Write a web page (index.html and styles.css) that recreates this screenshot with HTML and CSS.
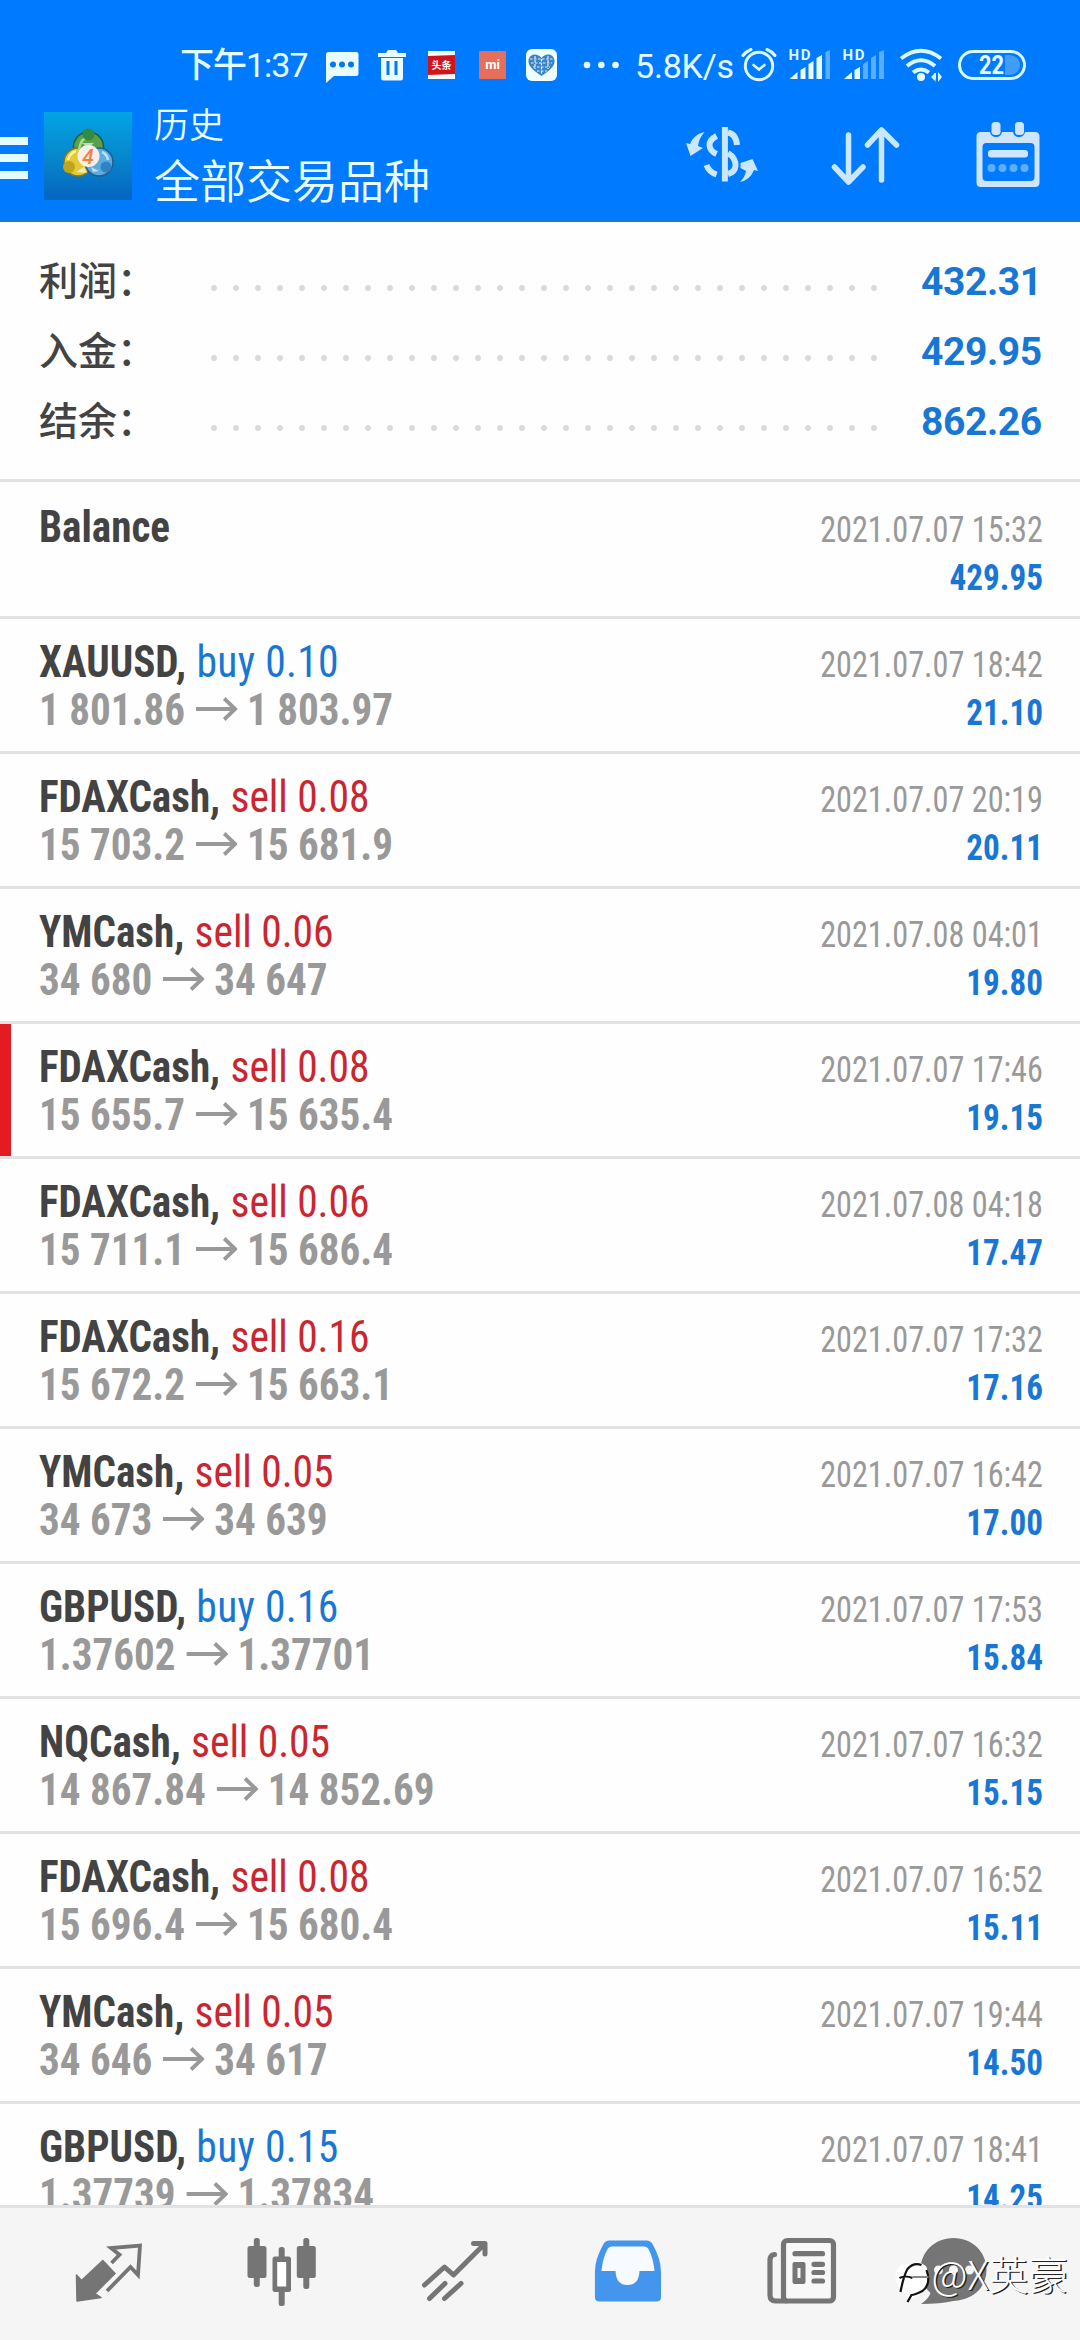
FILE: index.html
```html
<!DOCTYPE html>
<html lang="zh-CN">
<head>
<meta charset="utf-8">
<title>历史</title>
<link rel="stylesheet" href="styles.css">
</head>
<body>
<svg width="0" height="0" class="defs">
  <symbol id="arrow" viewBox="0 0 44 26"><path d="M0 13H41M30 2.500L41.500 13L30 23.500" fill="none" stroke="currentColor" stroke-width="4"/></symbol>
</svg>
<div class="screen">
  <header class="header">
    <div class="status">
      <span class="clock">下午1:37</span>
      <svg class="notices" viewBox="316 42 310 46" width="310" height="46">
        <path fill="#e8fcff" d="M328 52h28q2.500 0 2.500 2.500v19q0 2.500-2.500 2.500h-22l-8 7V54.500q0-2.500 2-2.500z"/>
        <g fill="#0878e8"><circle cx="333" cy="64.500" r="3"/><circle cx="342" cy="64.500" r="3"/><circle cx="351" cy="64.500" r="3"/></g>
        <path fill="#e8fcff" d="M378 53h8l2-3h8l2 3h8v4h-28zM381 58h22v20q0 2.500-2.500 2.500h-17q-2.500 0-2.500-2.500z"/>
        <path stroke="#0878e8" stroke-width="3" d="M388 61v14M396 61v14"/>
        <rect x="428" y="51" width="27" height="28" fill="#f4fbff"/>
        <path fill="#d0141c" d="M428 56l27-1v19l-27 1z"/>
        <text x="441.500" y="69" text-anchor="middle" font-size="10" font-weight="700" fill="#fff">头条</text>
        <rect x="479" y="51" width="27" height="28" fill="#e66f5c"/>
        <text x="492.500" y="69" text-anchor="middle" font-size="13" font-weight="700" fill="#fff" class="lat">mi</text>
        <rect x="526" y="49" width="31" height="32" rx="6" fill="#f0fdff"/>
        <path fill="#3c83c4" d="M541.500 76C531 69 528 65 528.500 60C530 53 538 53 541.500 58C545 53 553 53 554.500 60C555 65 552 69 541.500 76z"/>
        <path fill="none" stroke="#d8f2ff" stroke-width="1.200" stroke-dasharray="2.500 1.500" d="M530 59h23M531 63h21M533 67h17M537 71h10M535 56v13M541.500 59v15M548 56v13"/>
        <g fill="#e8fcff"><circle cx="587" cy="65" r="3.300"/><circle cx="601.300" cy="65" r="3.300"/><circle cx="615.500" cy="65" r="3.300"/></g>
      </svg>
      <span class="speed">5.8K/s</span>
      <svg class="signals" viewBox="738 42 300 46" width="300" height="46">
        <g fill="none" stroke="#d9f8ff" stroke-linecap="round">
          <circle cx="759" cy="66" r="13.700" stroke-width="3"/><path d="M753.500 65l5.500 4.500l5.500-4.500" stroke-width="2.600"/>
          <path d="M743 55.500q3-4 8-6M775 55.500q-3-4-8-6" stroke-width="3"/>
        </g>
        <g class="lat" font-size="15" font-weight="700" fill="#d9f8ff"><text x="788.500" y="60" textLength="22">HD</text><text x="842.500" y="60" textLength="22">HD</text></g>
        <g fill="#e8fcff"><path d="M789.500 79l8-7v7z"/><path d="M800.500 70l5-3v12h-5zM808.500 64l5-3v18h-5zM816.500 58l5.500-3v24h-5.500zM844 79l8-7v7zM854.500 70l5.500-3v12h-5.500z"/></g>
        <path fill="#5aadff" d="M825.500 52l4.500-2v29h-4.500zM863 64l5-3v18h-5zM871 58l5-3v24h-5zM879 52l5-2v29h-5z"/>
        <g fill="none" stroke="#d9f8ff" stroke-width="4"><path d="M901 58.500Q921 43 941 58.500M907 66Q921 54.500 935 66M913 72.500Q921 66.500 929 72.500"/></g>
        <circle cx="921" cy="77" r="4" fill="#e8fcff"/>
        <path fill="#d9f8ff" d="M931 77l4-4v8zM934 73h2v10zM938 72v10l4-5z"/>
        <rect x="959.500" y="51.500" width="65" height="27" rx="13.500" fill="none" stroke="#d9f8ff" stroke-width="3"/>
        <path fill="#409dfa" d="M1005 55h5q10 2 10 10t-10 10h-5z"/>
        <text x="991.500" y="74" text-anchor="middle" font-size="25" font-weight="700" fill="#e8fcff" class="lat" textLength="25" lengthAdjust="spacingAndGlyphs">22</text>
      </svg>
    </div>
    <div class="bar">
      <div class="burger"><i></i><i></i><i></i></div>
      <svg class="logo" viewBox="42 110 92 92" width="92" height="92">
        <defs><linearGradient id="sky" x1="0" y1="0" x2="0" y2="1"><stop offset="0" stop-color="#02a4e4"/><stop offset=".5" stop-color="#0788cc"/><stop offset="1" stop-color="#0565c0"/></linearGradient></defs>
        <rect x="44" y="112" width="88" height="88" fill="url(#sky)"/>
        <g stroke-width="1.500">
          <circle cx="88.500" cy="147" r="15" fill="#5aa04c" stroke="#23602c"/>
          <circle cx="78" cy="162" r="14" fill="#e3c83a" stroke="#82761c"/>
          <circle cx="99" cy="162" r="14" fill="#5cace0" stroke="#225c8c"/>
        </g>
        <path fill="none" stroke="#a9dc8a" stroke-width="2.500" d="M79 149Q81 138 88.500 137"/>
        <path fill="none" stroke="#fff09a" stroke-width="2.500" d="M68 160Q70 153 76 151"/>
        <path fill="none" stroke="#b8e2ff" stroke-width="2.500" d="M108 160Q107 154 102 152"/>
        <circle cx="88.500" cy="134.500" r="6" fill="#338a42"/><circle cx="69" cy="167" r="6" fill="#bfa51c"/><circle cx="106" cy="167" r="5.500" fill="#2f82c4"/>
        <path fill="#fff" opacity=".6" d="M82 143h12l-6 5zM76 172l8-5l3 6zM93 172l-2-5l8 4z"/>
        <circle cx="88.500" cy="156" r="11" fill="#f7efe8"/>
        <text x="88" y="163.500" text-anchor="middle" font-size="21" font-style="italic" font-weight="500" fill="#ee8242" class="lat">4</text>
      </svg>
      <div class="titles"><div class="small">历史</div><div class="large">全部交易品种</div></div>
      <svg class="actions" viewBox="680 115 370 80" width="370" height="80">
        <g fill="none" stroke="#c9e8ff" stroke-linecap="round" stroke-linejoin="round">
          <path stroke-width="6" stroke-linecap="butt" d="M724.900 127v54.500M728 132.500Q736 134 737 145M716.600 136Q709 140 709.500 145.500Q710 151 716.600 154M706.500 165Q709 172 716.600 174.500M728 153Q736 158 735.500 166Q735 172 728 174"/>
          <path stroke-width="5.500" d="M848.500 135v44M834.500 167l14 15l14.500-15M881.500 180v-49M867.500 145l14-15l15 15"/>
        </g>
        <path fill="#c9e8ff" d="M704.600 132Q699 138 698 146l5 2L690.500 156L686 143l4 1Q694 134 704.600 132zM740 182Q745 177 746 171l-5.500-3V163L752.500 159L758 171l-4-1Q750 180 740 182z"/>
        <path fill="#cfe5fb" fill-rule="evenodd" d="M981 132h9q1 5 6 5t6-5h11q1 5 6 5t6-5h10q4.500 0 4.500 4.500v46q0 4.500-4.500 4.500h-54q-4.500 0-4.500-4.500v-46q0-4.500 4.500-4.500zM982.500 147v30q0 4 4 4h44q4 0 4-4v-30q0-4-4-4h-44q-4 0-4 4z"/>
        <g fill="#cfe5fb"><rect x="991.500" y="122" width="9" height="13" rx="3.500"/><rect x="1015" y="122" width="9" height="13" rx="3.500"/><rect x="988" y="150" width="40" height="7.500" rx="3"/></g>
        <g fill="#5eafff"><circle cx="991.500" cy="168" r="4"/><circle cx="1002.500" cy="168" r="4"/><circle cx="1013.500" cy="168" r="4"/><circle cx="1024.500" cy="168" r="4"/></g>
      </svg>
    </div>
  </header>

  <section class="summary">
    <div class="sum"><span>利润：</span><i class="dots"></i><b>432.31</b></div>
    <div class="sum"><span>入金：</span><i class="dots"></i><b>429.95</b></div>
    <div class="sum"><span>结余：</span><i class="dots"></i><b>862.26</b></div>
  </section>

  <main class="list">
    <div class="row first"><div class="left"><div><b>Balance</b></div></div><div class="right"><div class="date">2021.07.07 15:32</div><b>429.95</b></div></div>
    <div class="row"><div class="left"><div><b>XAUUSD,</b> <span class="buy">buy 0.10</span></div><div class="price">1 801.86<svg><use href="#arrow"/></svg>1 803.97</div></div><div class="right"><div class="date">2021.07.07 18:42</div><b>21.10</b></div></div>
    <div class="row"><div class="left"><div><b>FDAXCash,</b> <span class="sell">sell 0.08</span></div><div class="price">15 703.2<svg><use href="#arrow"/></svg>15 681.9</div></div><div class="right"><div class="date">2021.07.07 20:19</div><b>20.11</b></div></div>
    <div class="row"><div class="left"><div><b>YMCash,</b> <span class="sell">sell 0.06</span></div><div class="price">34 680<svg><use href="#arrow"/></svg>34 647</div></div><div class="right"><div class="date">2021.07.08 04:01</div><b>19.80</b></div></div>
    <div class="row marked"><div class="left"><div><b>FDAXCash,</b> <span class="sell">sell 0.08</span></div><div class="price">15 655.7<svg><use href="#arrow"/></svg>15 635.4</div></div><div class="right"><div class="date">2021.07.07 17:46</div><b>19.15</b></div></div>
    <div class="row"><div class="left"><div><b>FDAXCash,</b> <span class="sell">sell 0.06</span></div><div class="price">15 711.1<svg><use href="#arrow"/></svg>15 686.4</div></div><div class="right"><div class="date">2021.07.08 04:18</div><b>17.47</b></div></div>
    <div class="row"><div class="left"><div><b>FDAXCash,</b> <span class="sell">sell 0.16</span></div><div class="price">15 672.2<svg><use href="#arrow"/></svg>15 663.1</div></div><div class="right"><div class="date">2021.07.07 17:32</div><b>17.16</b></div></div>
    <div class="row"><div class="left"><div><b>YMCash,</b> <span class="sell">sell 0.05</span></div><div class="price">34 673<svg><use href="#arrow"/></svg>34 639</div></div><div class="right"><div class="date">2021.07.07 16:42</div><b>17.00</b></div></div>
    <div class="row"><div class="left"><div><b>GBPUSD,</b> <span class="buy">buy 0.16</span></div><div class="price">1.37602<svg><use href="#arrow"/></svg>1.37701</div></div><div class="right"><div class="date">2021.07.07 17:53</div><b>15.84</b></div></div>
    <div class="row"><div class="left"><div><b>NQCash,</b> <span class="sell">sell 0.05</span></div><div class="price">14 867.84<svg><use href="#arrow"/></svg>14 852.69</div></div><div class="right"><div class="date">2021.07.07 16:32</div><b>15.15</b></div></div>
    <div class="row"><div class="left"><div><b>FDAXCash,</b> <span class="sell">sell 0.08</span></div><div class="price">15 696.4<svg><use href="#arrow"/></svg>15 680.4</div></div><div class="right"><div class="date">2021.07.07 16:52</div><b>15.11</b></div></div>
    <div class="row"><div class="left"><div><b>YMCash,</b> <span class="sell">sell 0.05</span></div><div class="price">34 646<svg><use href="#arrow"/></svg>34 617</div></div><div class="right"><div class="date">2021.07.07 19:44</div><b>14.50</b></div></div>
    <div class="row"><div class="left"><div><b>GBPUSD,</b> <span class="buy">buy 0.15</span></div><div class="price">1.37739<svg><use href="#arrow"/></svg>1.37834</div></div><div class="right"><div class="date">2021.07.07 18:41</div><b>14.25</b></div></div>
  </main>

  <nav class="tabs">
    <svg viewBox="21.500 2208 173 132" width="173" height="132"><path fill="#757575" stroke="#757575" stroke-width="1.500" stroke-linejoin="round" d="M76 2275l5 5.500L102.300 2260.500L114.500 2273.500L94.500 2293.500L100.500 2297.500L76.500 2301z"/><path fill="none" stroke="#757575" stroke-width="3.800" d="M111 2263l8-8.300L110.500 2248L139.500 2245.500L137.500 2275L130 2267L106.500 2291"/></svg>
    <svg viewBox="194.500 2208 173 132" width="173" height="132"><g fill="#757575"><rect x="247" y="2246" width="19" height="32" rx="2.500"/><rect x="253.300" y="2238" width="6" height="49" rx="2.500"/><rect x="296.300" y="2246" width="19" height="32" rx="2.500"/><rect x="302.800" y="2238" width="6" height="51" rx="2.500"/><rect x="278.200" y="2247" width="6" height="59" rx="2.500"/><rect x="272" y="2256.500" width="18.500" height="35.500" rx="2.500"/></g><rect x="276.700" y="2262" width="9" height="24.500" fill="#fff"/></svg>
    <svg viewBox="367.500 2208 173 132" width="173" height="132"><path fill="none" stroke="#757575" stroke-width="5" stroke-linecap="round" stroke-linejoin="round" d="M424 2285L444 2267L453 2275L484 2244M473 2243.500H484.500V2254M429 2298.500L444.500 2283.500M444 2298.500L460.500 2283.500"/></svg>
    <svg viewBox="540.500 2208 173 132" width="173" height="132"><path fill="#4395ee" d="M609 2240.500H646Q650 2240.500 652 2244Q660.500 2259 660.500 2272V2297Q660.500 2301.500 656 2301.500H599Q594.400 2301.500 594.400 2297V2272Q594.400 2259 603 2244Q605 2240.500 609 2240.500z"/><path fill="#f7fbff" d="M611 2246.500H644Q646.500 2246.500 648 2249Q653 2259 654 2271H639Q638.500 2285 627 2285Q615.500 2285 615 2271H601Q602 2259 607 2249Q608.500 2246.500 611 2246.500z"/></svg>
    <svg viewBox="713.500 2208 173 132" width="173" height="132"><path fill="none" stroke="#757575" stroke-width="5.200" stroke-linecap="round" d="M774 2254.500Q769.500 2255 769.500 2260V2295Q769.500 2301 775 2301H785"/><rect x="783" y="2240.500" width="50" height="60.500" rx="4" fill="#f8f8f8" stroke="#757575" stroke-width="5.200"/><path stroke="#757575" stroke-width="5.200" stroke-linecap="round" d="M794.500 2253.700h27.500M813.500 2264.300h8.500M813.500 2272.500h8.500M813.500 2281h8.500"/><rect x="792" y="2262" width="13" height="22" rx="2" fill="#757575"/><rect x="797" y="2268" width="3" height="10" fill="#f5f5f5"/></svg>
    <div class="chat">
      <svg viewBox="886.500 2208 193.500 132" width="193.500" height="132"><path fill="#757575" d="M953 2238C972 2238 986 2252 986 2270C986 2288 972 2300 953 2301Q940 2304 920.500 2304Q928 2299 930 2293Q920 2284 920 2270C920 2252 934 2238 953 2238z"/><g fill="#f5f5f5"><circle cx="938" cy="2270" r="4.500"/><circle cx="953" cy="2270" r="4.500"/><circle cx="969" cy="2270" r="4.500"/></g>
      <path fill="#fff" d="M896 2271Q899 2263 909 2265Q919 2259 926 2267Q930 2278 924 2289Q918 2299 907 2299L900 2288Q893 2280 896 2271z"/><path fill="none" stroke="#111" stroke-width="2.200" d="M900 2292Q903 2276 907 2269Q913 2262 921 2265M899 2278Q905 2275 912 2278M926 2270Q931 2284 922 2291Q914 2295 911 2295L907 2302"/><path stroke="#888" stroke-width="2" d="M912 2277h16"/></svg>
      <span class="mark">@X英豪</span>
    </div>
  </nav>
</div>
</body>
</html>
```
FILE: styles.css
```css
* { box-sizing: border-box; }
body { margin: 0; background: #fefefe; font-family: Roboto, "Noto Sans CJK SC", sans-serif; }
.defs { display: block; }
.lat { font-family: Roboto, sans-serif; }
.screen { width: 1080px; height: 2340px; display: flex; flex-direction: column; overflow: hidden; }

.header { height: 222px; flex: none; background: #007aff; border-bottom: 2px solid #1a76d8; color: #e4fbff; }
.status { height: 100px; padding: 42px 0 0 180px; display: flex; align-items: flex-start; }
.status svg { flex: none; font-family: "Noto Sans CJK SC", sans-serif; }
.clock { width: 136px; font-size: 34px; line-height: 47px; white-space: nowrap; font-weight: 450; letter-spacing: -1px; }
.speed { width: 112px; padding-left: 9px; font-size: 34px; line-height: 48px; font-weight: 450; letter-spacing: -.2px; white-space: nowrap; }
.bar { height: 120px; display: flex; align-items: flex-start; }
.burger { width: 42px; padding-top: 37px; display: flex; flex-direction: column; gap: 9px; }
.burger i { width: 28px; height: 8px; background: #e4fbff; }
.logo { margin-top: 10px; flex: none; }
.titles { width: 546px; padding-left: 20px; color: #e9fdff; font-family: "Noto Sans CJK SC", sans-serif; font-weight: 350; }
.small { font-size: 35px; line-height: 44px; margin-top: 1px; }
.large { font-size: 46px; line-height: 56px; margin-top: 5px; }
.actions { margin-top: 15px; flex: none; }

.summary { flex: none; height: 260px; padding: 22px 37px 0 39px; border-bottom: 3px solid #e2e2e2; }
.sum { height: 70px; display: flex; align-items: center; color: #434343; font-size: 39px; }
.sum span { width: 164px; font-family: "Noto Sans CJK SC", sans-serif; font-weight: 500; line-height: 70px; margin-top: -3px; white-space: nowrap; }
.dots { width: 682px; height: 22px; margin-top: 18px; background: radial-gradient(circle at center, #dadada 2.500px, transparent 3.500px) 0 0 / 22px 22px; }
.sum b { margin-left: 36px; color: #1876d4; font-size: 39px; font-weight: 700; letter-spacing: -.4px; white-space: nowrap; margin-top: 5px; }

.list { flex: 1; min-height: 0; overflow: hidden; font-family: "Roboto Condensed", Roboto, sans-serif; }
.row { height: 135px; padding: 18px 37px 0 39px; display: flex; justify-content: space-between; border-bottom: 3px solid #e2e2e4; white-space: nowrap; }
.row.first { height: 137px; padding-top: 20px; }
.row.marked { box-shadow: inset 11px 0 0 #e31c23; }
.left { padding-top: 1.500px; font-size: 43.500px; line-height: 48px; color: #434343; transform: scaleX(.945); transform-origin: left; }
.left b { font-weight: 700; }
.left span { font-size: 44px; line-height: 40px; font-weight: 420; margin-left: 1px; }
.buy { color: #1876d4; letter-spacing: .3px; }
.sell { color: #ca2630; letter-spacing: -.1px; }
.price { color: #999; font-weight: 700; display: flex; align-items: center; }
.price svg { width: 44px; height: 26px; margin: -4px 10.500px 0 11px; }
.right { padding-top: 3.500px; font-size: 36px; line-height: 48px; color: #999; text-align: right; }
.right .date { transform: scaleX(.895); transform-origin: right; }
.right b { display: block; color: #1876d4; font-weight: 700; transform: scaleX(.92); transform-origin: right; }

.tabs { flex: none; height: 135px; background: #f5f5f5; border-top: 3px solid #e2e2e4; padding-left: 21.500px; display: flex; }
.chat { position: relative; }
.mark { position: absolute; left: 45px; top: 41px; font-family: "Noto Sans CJK SC", sans-serif; font-weight: 300; font-size: 39.500px; line-height: 48px; color: #fff; text-shadow: 1.500px 1px 0 #222; white-space: nowrap; }
```
